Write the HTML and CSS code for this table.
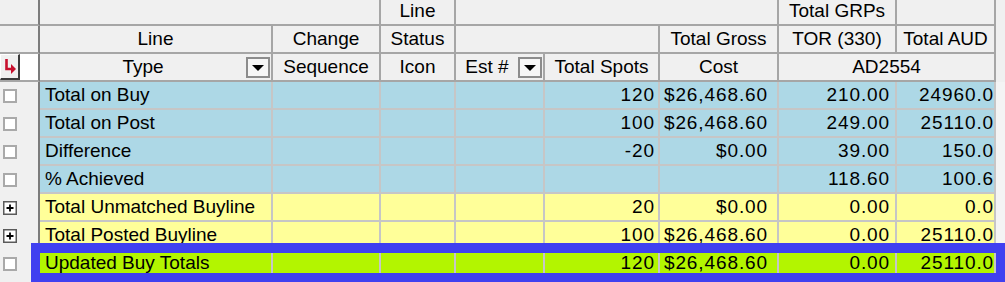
FILE: index.html
```html
<!DOCTYPE html>
<html>
<head>
<meta charset="utf-8">
<link rel="stylesheet" href="styles.css">
</head>
<body>
<div class="wrap">
<table class="tbl">
<colgroup>
<col class="c0"><col class="c1"><col class="c2"><col class="c3"><col class="c4"><col class="c5"><col class="c6"><col class="c7"><col class="c8"><col class="c9">
</colgroup>
<thead>
<tr class="h1">
<th class="sel"></th><th colspan="2"></th><th>Line</th><th colspan="3"></th><th>Total GRPs</th><th></th><th class="fill"></th>
</tr>
<tr class="h2">
<th class="sel"></th><th>Line</th><th>Change</th><th>Status</th><th colspan="2"></th><th>Total Gross</th><th>TOR (330)</th><th>Total AUD</th><th class="fill"></th>
</tr>
<tr class="h3">
<th class="sel selh"><div class="selwrap"><span class="selbtn"><svg width="16" height="20" viewBox="0 0 16 20"><path d="M4.5 2 V12 H10" fill="none" stroke="#c8102e" stroke-width="2.6"/><path d="M9 7 L14 12 L9 17 Z" fill="#c8102e"/></svg></span><span class="selwhite"></span></div></th>
<th><div class="hf"><span class="t">Type</span><span class="dd"><span class="tri"></span></span></div></th>
<th>Sequence</th>
<th>Icon</th>
<th><div class="hf"><span class="t">Est #</span><span class="dd"><span class="tri"></span></span></div></th>
<th>Total Spots</th>
<th>Cost</th>
<th colspan="2">AD2554</th>
<th class="fill"></th>
</tr>
</thead>
<tbody>
<tr class="blue">
<td class="sel"><span class="chk"></span></td><td class="name">Total on Buy</td><td></td><td></td><td></td><td class="num spots">120</td><td class="num cost">$26,468.60</td><td class="num tor">210.00</td><td class="num aud">24960.0</td><td class="fill"></td>
</tr>
<tr class="blue">
<td class="sel"><span class="chk"></span></td><td class="name">Total on Post</td><td></td><td></td><td></td><td class="num spots">100</td><td class="num cost">$26,468.60</td><td class="num tor">249.00</td><td class="num aud">25110.0</td><td class="fill"></td>
</tr>
<tr class="blue">
<td class="sel"><span class="chk"></span></td><td class="name">Difference</td><td></td><td></td><td></td><td class="num spots">-20</td><td class="num cost">$0.00</td><td class="num tor">39.00</td><td class="num aud">150.0</td><td class="fill"></td>
</tr>
<tr class="blue">
<td class="sel"><span class="chk"></span></td><td class="name">% Achieved</td><td></td><td></td><td></td><td class="num spots"></td><td class="num cost"></td><td class="num tor">118.60</td><td class="num aud">100.6</td><td class="fill"></td>
</tr>
<tr class="yellow">
<td class="sel"><span class="plus"><svg width="14" height="14" viewBox="0 0 14 14"><rect x="0.75" y="0.75" width="12.5" height="12.5" fill="#fff" stroke="#5a5a5a" stroke-width="1.5"/><path d="M3.5 7 H10.5 M7 3.5 V10.5" stroke="#000" stroke-width="1.8"/></svg></span></td><td class="name">Total Unmatched Buyline</td><td></td><td></td><td></td><td class="num spots">20</td><td class="num cost">$0.00</td><td class="num tor">0.00</td><td class="num aud">0.0</td><td class="fill"></td>
</tr>
<tr class="yellow">
<td class="sel"><span class="plus"><svg width="14" height="14" viewBox="0 0 14 14"><rect x="0.75" y="0.75" width="12.5" height="12.5" fill="#fff" stroke="#5a5a5a" stroke-width="1.5"/><path d="M3.5 7 H10.5 M7 3.5 V10.5" stroke="#000" stroke-width="1.8"/></svg></span></td><td class="name">Total Posted Buyline</td><td></td><td></td><td></td><td class="num spots">100</td><td class="num cost">$26,468.60</td><td class="num tor">0.00</td><td class="num aud">25110.0</td><td class="fill"></td>
</tr>
<tr class="green">
<td class="sel"><span class="chk"></span></td><td class="name">Updated Buy Totals</td><td></td><td></td><td></td><td class="num spots">120</td><td class="num cost">$26,468.60</td><td class="num tor">0.00</td><td class="num aud">25110.0</td><td class="fill"></td>
</tr>
</tbody>
</table>
<div class="highlight"></div>
</div>
</body>
</html>
```
FILE: styles.css
```css
html, body {
  margin: 0;
  padding: 0;
}
body {
  background: #f0f0f0;
  font-family: "Liberation Sans", Arial, sans-serif;
  font-size: 19px;
  color: #000;
  width: 1005px;
  height: 282px;
  overflow: hidden;
}
.wrap {
  position: relative;
  width: 1005px;
  height: 282px;
}
.tbl {
  border-collapse: separate;
  border-spacing: 0;
  table-layout: fixed;
  width: 1005px;
}
.c0 { width: 40px; }
.c1 { width: 233px; }
.c2 { width: 108px; }
.c3 { width: 75px; }
.c4 { width: 89px; }
.c5 { width: 115px; }
.c6 { width: 119px; }
.c7 { width: 118px; }
.c8 { width: 99px; }
.c9 { width: 9px; }

th, td {
  padding: 0;
  box-sizing: border-box;
  white-space: nowrap;
  overflow: hidden;
  font-weight: normal;
}
thead th {
  background: #f0f0f0;
  border-right: 2px solid #a6a6a6;
  border-bottom: 2px solid #a6a6a6;
  text-align: center;
  vertical-align: middle;
}
.h1 { height: 25px; }
.h2, .h3 { height: 28px; }
.h1 th { padding-bottom: 2px; }

thead th.sel, tbody td.sel {
  border-right: 2px solid #7c7c7c;
}
thead th.fill, tbody td.fill {
  border: none;
  background: #f4f4f4;
}
thead th.fill { background: #f0f0f0; }

.selh { padding: 0; }
.selwrap {
  display: flex;
  height: 26px;
}
.selbtn {
  width: 20px;
  height: 26px;
  box-sizing: border-box;
  background: #f0f0f0;
  border-top: 1px solid #ffffff;
  border-left: 1px solid #ffffff;
  border-right: 2px solid #3c3c3c;
  border-bottom: 2px solid #3c3c3c;
  display: flex;
  align-items: center;
  justify-content: center;
}
.selwhite {
  flex: 1;
  background: #ffffff;
}

.hf {
  display: flex;
  align-items: center;
  height: 26px;
}
.hf .t {
  flex: 1;
  text-align: center;
}
.dd {
  width: 24px;
  height: 21px;
  box-sizing: border-box;
  border: 2px solid #8c8c8c;
  background: #f6f6f6;
  margin-right: 1px;
  display: flex;
  align-items: center;
  justify-content: center;
}
.tri {
  width: 0;
  height: 0;
  border-left: 6px solid transparent;
  border-right: 6px solid transparent;
  border-top: 6px solid #000;
  margin-top: 1px;
}

tbody tr { height: 28px; }
tbody td {
  border-right: 2px solid #c6c6c6;
  border-bottom: 2px solid #c6c6c6;
  vertical-align: middle;
}
tbody td.sel {
  background: #f0f0f0;
  border-bottom: none;
  padding-left: 3px;
}
.chk {
  display: block;
  width: 14px;
  height: 14px;
  box-sizing: border-box;
  border: 2px solid #a9a9a9;
  background: #ffffff;
}
.plus {
  display: block;
  width: 14px;
  height: 14px;
}
.plus svg { display: block; }

.name {
  padding-left: 5px;
  text-align: left;
}
.num {
  text-align: right;
  letter-spacing: 0.9px;
}
.spots { padding-right: 3px; }
.cost { padding-right: 9px; }
.tor { padding-right: 5px; }
.aud { padding-right: 0; }

.blue td:not(.sel):not(.fill) { background: #add8e6; }
.yellow td:not(.sel):not(.fill) { background: #ffff99; }
.green td:not(.sel):not(.fill) { background: #b3f500; }

.highlight {
  position: absolute;
  left: 31px;
  top: 243px;
  width: 974px;
  height: 39px;
  box-sizing: border-box;
  border-style: solid;
  border-color: #4040f0;
  border-width: 10px 9px 9px 9px;
}
```
